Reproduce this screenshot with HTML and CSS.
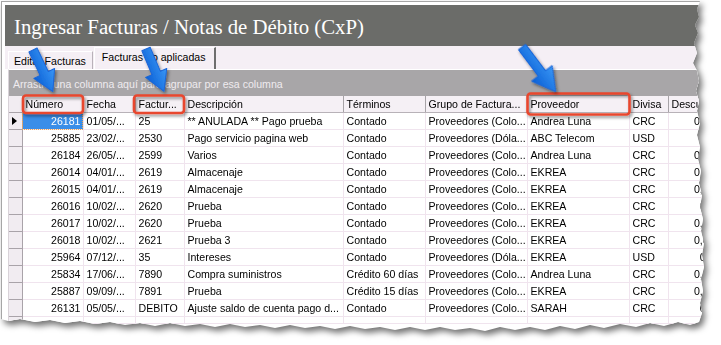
FILE: index.html
```html
<!DOCTYPE html>
<html lang="es">
<head>
  <meta charset="UTF-8">
  <title>Ingresar Facturas / Notas de Débito (CxP)</title>
  <link rel="stylesheet" href="styles.css">
</head>
<body>
<div class="page">
  <div class="shot">
    <div class="frame">
      <div class="title">Ingresar Facturas / Notas de Débito (CxP)</div>

      <div class="tabs">
        <div class="tab">Editar Facturas</div>
        <div class="tab active">Facturas no aplicadas</div>
      </div>

      <div class="grid">
        <div class="group-panel">Arrastre una columna aquí para agrupar por esa columna</div>
        <table>
          <colgroup>
            <col class="c-sel"><col class="c-num"><col class="c-fecha"><col class="c-fact">
            <col class="c-desc"><col class="c-term"><col class="c-grupo"><col class="c-prov">
            <col class="c-div"><col class="c-dto">
          </colgroup>
          <thead>
            <tr>
              <th class="sel"></th>
              <th>Número</th>
              <th>Fecha</th>
              <th>Factur...</th>
              <th>Descripción</th>
              <th>Términos</th>
              <th>Grupo de Factura...</th>
              <th>Proveedor</th>
              <th>Divisa</th>
              <th>Descu</th>
            </tr>
          </thead>
          <tbody>
            <tr class="current">
              <td class="sel"><span class="pointer"></span></td>
              <td class="num focus">26181</td><td>01/05/...</td><td>25</td>
              <td>** ANULADA ** Pago prueba</td><td>Contado</td><td>Proveedores (Colo...</td>
              <td>Andrea Luna</td><td>CRC</td><td class="num">0,00</td>
            </tr>
            <tr>
              <td class="sel"></td>
              <td class="num">25885</td><td>23/02/...</td><td>2530</td>
              <td>Pago servicio pagina web</td><td>Contado</td><td>Proveedores (Dóla...</td>
              <td>ABC Telecom</td><td>USD</td><td class="num">0,0</td>
            </tr>
            <tr>
              <td class="sel"></td>
              <td class="num">26184</td><td>26/05/...</td><td>2599</td>
              <td>Varios</td><td>Contado</td><td>Proveedores (Colo...</td>
              <td>Andrea Luna</td><td>CRC</td><td class="num">0,00</td>
            </tr>
            <tr>
              <td class="sel"></td>
              <td class="num">26014</td><td>04/01/...</td><td>2619</td>
              <td>Almacenaje</td><td>Contado</td><td>Proveedores (Colo...</td>
              <td>EKREA</td><td>CRC</td><td class="num">0,00</td>
            </tr>
            <tr>
              <td class="sel"></td>
              <td class="num">26015</td><td>04/01/...</td><td>2619</td>
              <td>Almacenaje</td><td>Contado</td><td>Proveedores (Colo...</td>
              <td>EKREA</td><td>CRC</td><td class="num">0,00</td>
            </tr>
            <tr>
              <td class="sel"></td>
              <td class="num">26016</td><td>10/02/...</td><td>2620</td>
              <td>Prueba</td><td>Contado</td><td>Proveedores (Colo...</td>
              <td>EKREA</td><td>CRC</td><td class="num">0,0</td>
            </tr>
            <tr>
              <td class="sel"></td>
              <td class="num">26017</td><td>10/02/...</td><td>2620</td>
              <td>Prueba</td><td>Contado</td><td>Proveedores (Colo...</td>
              <td>EKREA</td><td>CRC</td><td class="num">0,00</td>
            </tr>
            <tr>
              <td class="sel"></td>
              <td class="num">26018</td><td>10/02/...</td><td>2621</td>
              <td>Prueba 3</td><td>Contado</td><td>Proveedores (Colo...</td>
              <td>EKREA</td><td>CRC</td><td class="num">0,00</td>
            </tr>
            <tr>
              <td class="sel"></td>
              <td class="num">25964</td><td>07/12/...</td><td>35</td>
              <td>Intereses</td><td>Contado</td><td>Proveedores (Dóla...</td>
              <td>EKREA</td><td>USD</td><td class="num">0,0</td>
            </tr>
            <tr>
              <td class="sel"></td>
              <td class="num">25834</td><td>17/06/...</td><td>7890</td>
              <td>Compra suministros</td><td>Crédito 60 días</td><td>Proveedores (Colo...</td>
              <td>Andrea Luna</td><td>CRC</td><td class="num">0,00</td>
            </tr>
            <tr>
              <td class="sel"></td>
              <td class="num">25887</td><td>09/09/...</td><td>7891</td>
              <td>Prueba</td><td>Crédito 15 días</td><td>Proveedores (Colo...</td>
              <td>EKREA</td><td>CRC</td><td class="num">0,00</td>
            </tr>
            <tr>
              <td class="sel"></td>
              <td class="num">26131</td><td>05/05/...</td><td>DEBITO</td>
              <td>Ajuste saldo de cuenta pago d...</td><td>Contado</td><td>Proveedores (Colo...</td>
              <td>SARAH</td><td>CRC</td><td class="num">0,0</td>
            </tr>
            <tr class="filler">
              <td class="sel"></td><td></td><td></td><td></td><td></td>
              <td></td><td></td><td></td><td></td><td></td>
            </tr>
          </tbody>
        </table>
      </div>
    </div>
  </div>

  <!-- anotaciones encima de la captura -->
  <svg class="marks" width="721" height="345" viewBox="0 0 721 345">
    <defs>
      <linearGradient id="azul" x1="0" y1="0" x2="0" y2="1">
        <stop offset="0" stop-color="#3a97f5"/>
        <stop offset="1" stop-color="#0b60d6"/>
      </linearGradient>
      <filter id="sombra" x="-30%" y="-30%" width="160%" height="160%">
        <feDropShadow dx="1.5" dy="2" stdDeviation="1.5" flood-color="#000" flood-opacity="0.45"/>
      </filter>
    </defs>

    <g class="box" filter="url(#sombra)">
      <rect x="23" y="95.5" width="60" height="17.5" rx="3"/>
      <rect x="134" y="95.5" width="50" height="17.5" rx="3"/>
      <rect x="527.5" y="93.5" width="102" height="21" rx="3"/>
    </g>

    <g class="arrow" filter="url(#sombra)">
      <polygon transform="translate(33 50) rotate(64.5)" points="0,-4.5 26,-4.5 26,-11.5 46,0 26,11.5 26,4.5 0,4.5"/>
      <polygon transform="translate(146 49) rotate(67)" points="0,-4.5 26,-4.5 26,-11.5 46,0 26,11.5 26,4.5 0,4.5"/>
      <polygon transform="translate(522 47) rotate(53)" points="0,-4.5 33,-4.5 33,-13 56,0 33,13 33,4.5 0,4.5"/>
    </g>
  </svg>
</div>
</body>
</html>
```

FILE: styles.css
```css
body {
  margin: 0;
  background: #fff;
  font-family: "Liberation Sans", Arial, sans-serif;
  font-size: 10.6px;
  color: #000;
}
.page {
  position: relative;
  width: 721px;
  height: 345px;
  overflow: hidden;
}
.shot {
  width: 721px;
  height: 345px;
  filter: drop-shadow(3px 4px 3px rgba(0, 0, 0, 0.55));
}
.frame {
  margin: 1px 0 0 1px;
  width: 712px;
  height: 334px;
  box-sizing: border-box;
  padding: 3px 0 0 3px;
  background: #fff;
  border-left: 1px solid #a6a6a6;
  border-top: 1px solid #a6a6a6;
  overflow: hidden;
  clip-path: polygon(0 0, 699px 0, 696px 8px, 698px 16px, 694px 24px, 697px 32px, 693px 42px, 696px 52px, 692px 62px, 696px 70px, 698px 80px, 695px 90px, 698px 100px, 696px 110px, 699px 122px, 696px 134px, 699px 146px, 697px 158px, 700px 170px, 698px 182px, 701px 194px, 699px 206px, 702px 218px, 700px 230px, 703px 242px, 701px 254px, 703px 266px, 700px 278px, 702px 290px, 699px 302px, 701px 312px, 698px 321px, 689px 324px, 677px 321px, 663px 325px, 649px 322px, 635px 326px, 619px 323px, 603px 327px, 589px 324px, 574px 328px, 559px 325px, 544px 329px, 529px 326px, 514px 329px, 499px 326px, 484px 330px, 469px 327px, 454px 329px, 439px 326px, 424px 329px, 409px 326px, 394px 329px, 379px 326px, 364px 328px, 349px 325px, 334px 328px, 319px 325px, 304px 327px, 289px 324px, 274px 327px, 259px 324px, 244px 326px, 229px 323px, 214px 326px, 199px 323px, 184px 325px, 169px 322px, 154px 325px, 139px 322px, 124px 324px, 109px 321px, 94px 323px, 79px 320px, 64px 322px, 49px 319px, 34px 321px, 19px 318px, 7px 320px, 0 318px);
}
.title {
  height: 41px;
  display: flex;
  align-items: center;
  padding: 2px 0 0 9px;
  box-sizing: border-box;
  background: #6b6c69;
  color: #fff;
  font-family: "Liberation Serif", "Times New Roman", serif;
  font-size: 20.8px;
  white-space: nowrap;
}
.tabs {
  height: 23px;
  display: flex;
  align-items: flex-end;
  padding-left: 3px;
  background: #f5eff5;
}
.tab {
  height: 18px;
  box-sizing: border-box;
  padding: 3px 6px 0 5px;
  border: 1px solid #fff;
  border-right-color: #b9b2b9;
  border-bottom: none;
  white-space: nowrap;
}
.tab.active {
  height: 22px;
  padding: 3px 8px 0 7px;
  margin-left: 1px;
  border-right: 2px solid #6e6e6e;
}
.grid {
  margin-left: 3px;
  border-top: 1px solid #fff;
  border-left: 1px solid #d8d2d8;
  background: #fff;
}
.group-panel {
  height: 26px;
  box-sizing: border-box;
  padding: 8px 0 0 4px;
  background: #a8a6a8;
  color: #efebef;
  white-space: nowrap;
}
table {
  border-collapse: collapse;
  table-layout: fixed;
  width: 708px;
}
.c-sel { width: 13px; }
.c-num { width: 61px; }
.c-fecha { width: 52px; }
.c-fact { width: 49px; }
.c-desc { width: 159px; }
.c-term { width: 82px; }
.c-grupo { width: 102px; }
.c-prov { width: 102px; }
.c-div { width: 39px; }
.c-dto { width: 49px; }
th, td {
  height: 16px;
  padding: 0 2px 0 3px;
  line-height: 16px;
  white-space: nowrap;
  overflow: hidden;
  text-align: left;
  font-weight: normal;
}
th {
  background: #f5f0f5;
  border-right: 1px solid #a7a3a7;
  border-bottom: 1px solid #b8b2b8;
}
td {
  border-right: 1px solid #f0e4ee;
  border-bottom: 1px solid #f0e4ee;
}
td.num {
  text-align: right;
  padding: 0 2px 0 0;
}
.sel {
  background: #f1ecf1;
  border-right: 1px solid #a9a3a9;
  border-bottom: 1px solid #a9a3a9;
  padding: 0;
  position: relative;
}
.pointer {
  position: absolute;
  left: 3px;
  top: 4px;
  border-left: 5px solid #000;
  border-top: 4px solid transparent;
  border-bottom: 4px solid transparent;
}
td.focus {
  background: #3a8ee8;
  color: #fff;
  outline: 1px dotted #f1a650;
  outline-offset: -1px;
}
.filler td {
  height: 6px;
}
.marks {
  position: absolute;
  left: 0;
  top: 0;
}
.box rect {
  fill: none;
  stroke: #e8472f;
  stroke-width: 2.6;
}
.arrow polygon {
  fill: url(#azul);
  stroke: #1b66d8;
  stroke-width: 1;
  stroke-linejoin: round;
}
```
